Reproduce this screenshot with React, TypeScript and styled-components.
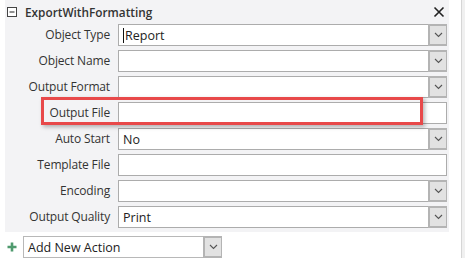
import React from 'react';
import styled, { createGlobalStyle } from 'styled-components';

const Global = createGlobalStyle`
  html, body { margin: 0; padding: 0; background: #ffffff; }
  body { font-family: "Segoe UI", "Open Sans", "Noto Sans", sans-serif; color: #262626; }
`;

const Page = styled.div`
  display: flex;
  width: 465px;
  height: 258px;
  overflow: hidden;
`;

const Main = styled.div`
  flex: 1;
  display: flex;
  flex-direction: column;
`;

const ScrollEdge = styled.div`
  width: 3px;
  border-left: 1px solid #d6d6d6;
  background: #f0f0f0;
`;

const Panel = styled.div`
  position: relative;
  margin-left: 5px;
  width: 444px;
  background: #f3f3f5;
  padding-bottom: 4px;
`;

const Header = styled.div`
  display: flex;
  align-items: center;
  height: 24px;
  padding-left: 2px;
`;

const Title = styled.div`
  font-weight: 600;
  font-size: 11.8px;
  margin-left: 8px;
  flex: 1;
  color: #333;
`;

const Rows = styled.div`
  display: grid;
  grid-template-columns: 113px 329px;
  row-gap: 4px;
`;

const Label = styled.div`
  text-align: right;
  padding-right: 8px;
  font-size: 12px;
  letter-spacing: -0.15px;
  line-height: 22px;
  color: #333;
`;

const Field = styled.div`
  display: flex;
  height: 22px;
  box-sizing: border-box;
  border: 1px solid #acacac;
  background: #fff;
`;

const Value = styled.div`
  flex: 1;
  display: flex;
  align-items: center;
  padding-left: 4px;
  font-size: 12.5px;
  color: #222;
`;

const Caret = styled.span`
  display: inline-block;
  width: 1px;
  height: 15px;
  background: #111;
  margin-right: 1px;
`;

const DropButton = styled.div`
  width: 19px;
  box-sizing: border-box;
  border: 2px solid #b4b4b4;
  border-right-width: 1px;
  margin: -1px -1px -1px 0;
  background: #e2e2e2;
  display: flex;
  align-items: center;
  justify-content: center;
`;

const Highlight = styled.div`
  position: absolute;
  left: 36px;
  top: 97px;
  width: 382px;
  height: 28px;
  box-sizing: border-box;
  border: 3px solid #e8494a;
  box-shadow: 2px 2px 4px rgba(0, 0, 0, 0.28);
  pointer-events: none;
`;

const Footer = styled.div`
  display: flex;
  align-items: center;
  margin-top: 4px;
  padding-left: 7px;
  gap: 6px;
`;

const AddCombo = styled(Field)`
  width: 199px;
  border-color: #b8b8b8;
`;

const Chevron = () => (
  <svg width="9" height="6" viewBox="0 0 9 6">
    <path d="M1 1 L4.5 4.5 L8 1" fill="none" stroke="#555" strokeWidth="1.1" />
  </svg>
);

const Combo = ({ value, caret }: { value?: string; caret?: boolean }) => (
  <Field>
    <Value>
      {caret && <Caret />}
      {value}
    </Value>
    <DropButton>
      <Chevron />
    </DropButton>
  </Field>
);

const TextBox = () => (
  <Field>
    <Value />
  </Field>
);

const rows: { label: string; kind: 'combo' | 'text'; value?: string; caret?: boolean }[] = [
  { label: 'Object Type', kind: 'combo', value: 'Report', caret: true },
  { label: 'Object Name', kind: 'combo' },
  { label: 'Output Format', kind: 'combo' },
  { label: 'Output File', kind: 'text' },
  { label: 'Auto Start', kind: 'combo', value: 'No' },
  { label: 'Template File', kind: 'text' },
  { label: 'Encoding', kind: 'combo' },
  { label: 'Output Quality', kind: 'combo', value: 'Print' },
];

export default function App() {
  return (
    <Page>
      <Global />
      <Main>
        <Panel>
          <Header>
            <svg width="10" height="10" viewBox="0 0 10 10">
              <rect x="0.5" y="0.5" width="9" height="9" fill="#fff" stroke="#444" />
              <path d="M2.5 5 H7.5" stroke="#222" />
            </svg>
            <Title>ExportWithFormatting</Title>
            <svg width="12" height="12" viewBox="0 0 12 12" style={{ marginRight: 4 }}>
              <path d="M1.5 1.5 L10.5 10.5 M10.5 1.5 L1.5 10.5" stroke="#222" strokeWidth="1.6" />
            </svg>
          </Header>
          <Rows>
            {rows.map((r) => (
              <React.Fragment key={r.label}>
                <Label>{r.label}</Label>
                {r.kind === 'combo' ? <Combo value={r.value} caret={r.caret} /> : <TextBox />}
              </React.Fragment>
            ))}
          </Rows>
          <Highlight />
        </Panel>
        <Footer>
          <svg width="10" height="10" viewBox="0 0 10 10">
            <path d="M5 0.5 V9.5 M0.5 5 H9.5" stroke="#4f9a6e" strokeWidth="2.6" />
          </svg>
          <AddCombo>
            <Value>Add New Action</Value>
            <DropButton>
              <Chevron />
            </DropButton>
          </AddCombo>
        </Footer>
      </Main>
      <ScrollEdge />
    </Page>
  );
}
